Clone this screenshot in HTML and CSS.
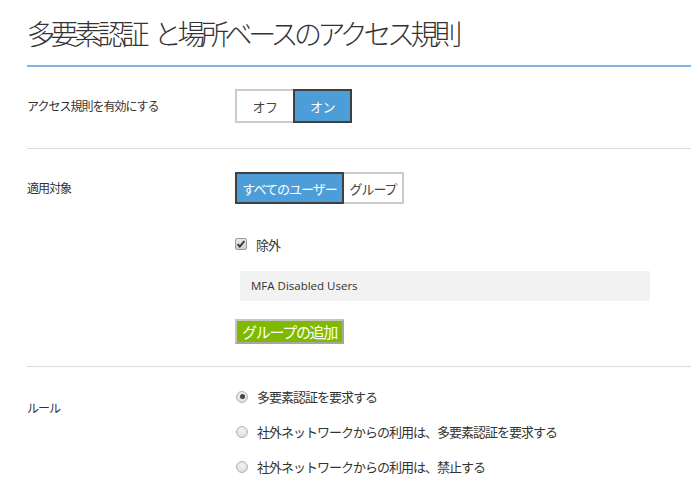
FILE: index.html
```html
<!DOCTYPE html>
<html lang="ja">
<head>
<meta charset="utf-8">
<link rel="stylesheet" href="styles.css">
</head>
<body>
<div class="page">
  <h1 class="title">多要素認証 と場所ベースのアクセス規則</h1>

  <div class="row row-enable">
    <div class="label lab-enable">アクセス規則を有効にする</div>
    <div class="controls">
      <div class="toggle">
        <span class="tbtn off w-off">オフ</span>
        <span class="tbtn on w-on">オン</span>
      </div>
    </div>
  </div>

  <div class="row row-target">
    <div class="label lab-target">適用対象</div>
    <div class="controls">
      <div class="toggle toggle2">
        <span class="tbtn on w-all">すべてのユーザー</span>
        <span class="tbtn off w-grp">グループ</span>
      </div>
      <div class="check-row">
        <span class="checkbox">
          <svg width="12" height="12" viewBox="0 0 12 12"><path d="M2.6 6.2 L4.8 8.6 L9.4 3" fill="none" stroke="#333" stroke-width="1.9"/></svg>
        </span>
        <span class="check-label">除外</span>
      </div>
      <div class="group-box">MFA Disabled Users</div>
      <div class="add-btn">グループの追加</div>
    </div>
  </div>

  <div class="row row-rule">
    <div class="label lab-rule">ルール</div>
    <div class="controls">
      <div class="radio-row"><span class="radio checked"></span><span class="radio-label">多要素認証を要求する</span></div>
      <div class="radio-row"><span class="radio"></span><span class="radio-label">社外ネットワークからの利用は、多要素認証を要求する</span></div>
      <div class="radio-row"><span class="radio"></span><span class="radio-label">社外ネットワークからの利用は、禁止する</span></div>
    </div>
  </div>
</div>
</body>
</html>
```

FILE: styles.css
```css
html, body {
  margin: 0;
  padding: 0;
  background: #fff;
}
body {
  font-family: "Noto Sans", "Noto Sans CJK JP", sans-serif;
  color: #333;
  width: 691px;
  height: 488px;
  overflow: hidden;
}
.page {
  padding-left: 27px;
}
.title {
  margin: 0;
  box-sizing: border-box;
  height: 67px;
  padding-top: 14px;
  font-family: "Noto Sans CJK JP", sans-serif;
  font-weight: 300;
  font-size: 28px;
  line-height: 38px;
  letter-spacing: -4.4px;
  word-spacing: 7px;
  color: #333;
  border-bottom: 2px solid #7fb3e0;
}
.row {
  display: grid;
  grid-template-columns: 208px 1fr;
  border-bottom: 1px solid #dcdcdc;
}
.label {
  font-family: "Noto Sans CJK JP", sans-serif;
  font-size: 12px;
  letter-spacing: -1px;
  color: #333;
}
.row-enable {
  padding: 22px 0 25px;
}
.lab-enable {
  line-height: 34px;
}
.toggle {
  display: flex;
}
.tbtn {
  box-sizing: border-box;
  height: 34px;
  display: flex;
  align-items: center;
  justify-content: center;
  font-family: "Noto Sans CJK JP", sans-serif;
  font-size: 13px;
  letter-spacing: -0.5px;
}
.tbtn.off {
  border: 2px solid #cccccc;
  background: #fff;
  color: #444;
}
.tbtn.on {
  border: 2px solid #404040;
  background: #4c9dd8;
  color: #fff;
}
.w-off { width: 58px; border-right: none !important; }
.w-on { width: 59px; }
.row-target {
  padding: 23px 0 22px;
}
.lab-target {
  line-height: 32px;
}
.toggle2 .tbtn {
  height: 32px;
}
.w-all { width: 109px; letter-spacing: -1px; }
.w-grp { width: 60px; border-left: none !important; letter-spacing: -1px; }
.check-row {
  display: flex;
  align-items: center;
  height: 14px;
  margin-top: 33px;
}
.checkbox {
  box-sizing: border-box;
  width: 12px;
  height: 12px;
  border: 1px solid #9a9a9a;
  border-radius: 2px;
  background: linear-gradient(#e8e8e8, #cfcfcf);
  display: flex;
  align-items: center;
  justify-content: center;
  overflow: hidden;
}
.checkbox svg {
  flex: none;
}
.check-label {
  margin-left: 9px;
  font-family: "Noto Sans CJK JP", sans-serif;
  font-size: 13px;
  letter-spacing: -1px;
}
.group-box {
  margin-top: 20px;
  margin-left: 5px;
  width: 410px;
  height: 30px;
  box-sizing: border-box;
  background: #f2f2f2;
  padding-left: 11px;
  font-family: "Open Sans", "Noto Sans", sans-serif;
  font-size: 11.5px;
  line-height: 30px;
  color: #333;
}
.add-btn {
  margin-top: 18px;
  box-sizing: border-box;
  width: 109px;
  height: 25px;
  border: 2px solid #a6a6a6;
  border-top-color: #c4c4c4;
  border-left-color: #c4c4c4;
  background: #7fba00;
  color: #fff;
  font-family: "Noto Sans CJK JP", sans-serif;
  font-size: 15px;
  letter-spacing: -1.3px;
  line-height: 21px;
  text-align: center;
}
.row-rule {
  border-bottom: none;
  padding-top: 12px;
}
.lab-rule {
  padding-top: 21px;
  line-height: 16px;
}
.radio-row {
  display: flex;
  align-items: center;
  height: 35px;
}
.radio {
  box-sizing: border-box;
  width: 12px;
  height: 12px;
  margin-left: 1px;
  border-radius: 50%;
  border: 1px solid #b4b4b4;
  background: radial-gradient(circle at 50% 35%, #f4f4f4, #d6d6d6);
  position: relative;
}
.radio.checked::after {
  content: "";
  position: absolute;
  left: 2.5px;
  top: 2.5px;
  width: 5px;
  height: 5px;
  border-radius: 50%;
  background: #444;
}
.radio-label {
  margin-left: 9px;
  font-family: "Noto Sans CJK JP", sans-serif;
  font-size: 13px;
  letter-spacing: -1px;
  color: #333;
}
```
